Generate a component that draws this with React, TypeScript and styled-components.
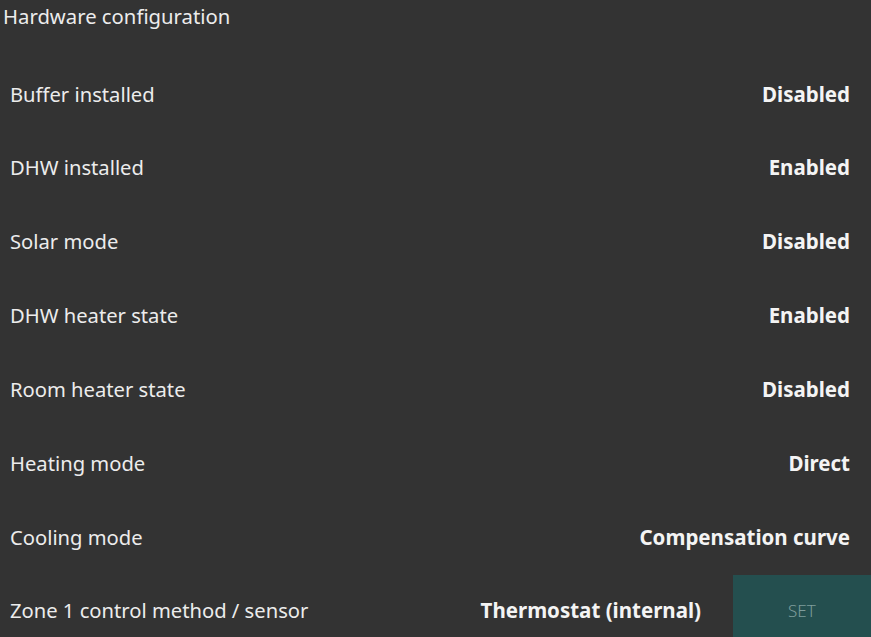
import styled, { createGlobalStyle } from 'styled-components';

const GlobalStyle = createGlobalStyle`
  html, body {
    margin: 0;
    padding: 0;
    background: #333333;
    overflow: hidden;
  }
  body {
    font-family: 'Noto Sans', 'Open Sans', sans-serif;
    color: #ececec;
  }
`;

type Setting = {
  label: string;
  value: string;
  settable?: boolean;
};

const settings: Setting[] = [
  { label: 'Buffer installed', value: 'Disabled' },
  { label: 'DHW installed', value: 'Enabled' },
  { label: 'Solar mode', value: 'Disabled' },
  { label: 'DHW heater state', value: 'Enabled' },
  { label: 'Room heater state', value: 'Disabled' },
  { label: 'Heating mode', value: 'Direct' },
  { label: 'Cooling mode', value: 'Compensation curve' },
  { label: 'Zone 1 control method / sensor', value: 'Thermostat (internal)', settable: true },
];

const App = () => {
  return (
    <>
      <GlobalStyle />
      <Page>
        <Title>Hardware configuration</Title>
        <List>
          {settings.map((s) => (
            <Row key={s.label}>
              <Label>{s.label}</Label>
              <Value $settable={s.settable}>{s.value}</Value>
              {s.settable && <SetButton>SET</SetButton>}
            </Row>
          ))}
        </List>
      </Page>
    </>
  );
};

export default App;

const Page = styled.div`
  width: 871px;
  height: 637px;
  display: flex;
  flex-direction: column;
`;

const Title = styled.div`
  font-size: 20.3px;
  line-height: 32px;
  padding-left: 3px;
  margin-bottom: 24.6px;
`;

const List = styled.div`
  display: flex;
  flex-direction: column;
`;

const Row = styled.div`
  height: 73.85px;
  display: flex;
  align-items: center;
  padding-left: 10px;
`;

const Label = styled.span`
  flex: 1;
  font-size: 20.2px;
`;

const Value = styled.span<{ $settable?: boolean }>`
  font-size: 20.5px;
  font-weight: 700;
  color: #f4f4f4;
  margin-right: ${(p) => (p.$settable ? '32px' : '21px')};
`;

const SetButton = styled.button`
  width: 150px;
  height: 70px;
  margin-right: -12px;
  border: none;
  background: #244f4f;
  color: #7f9d9c;
  font-family: 'Noto Sans', sans-serif;
  font-size: 17px;
  font-weight: 300;
  text-align: left;
  padding-left: 55px;
`;
